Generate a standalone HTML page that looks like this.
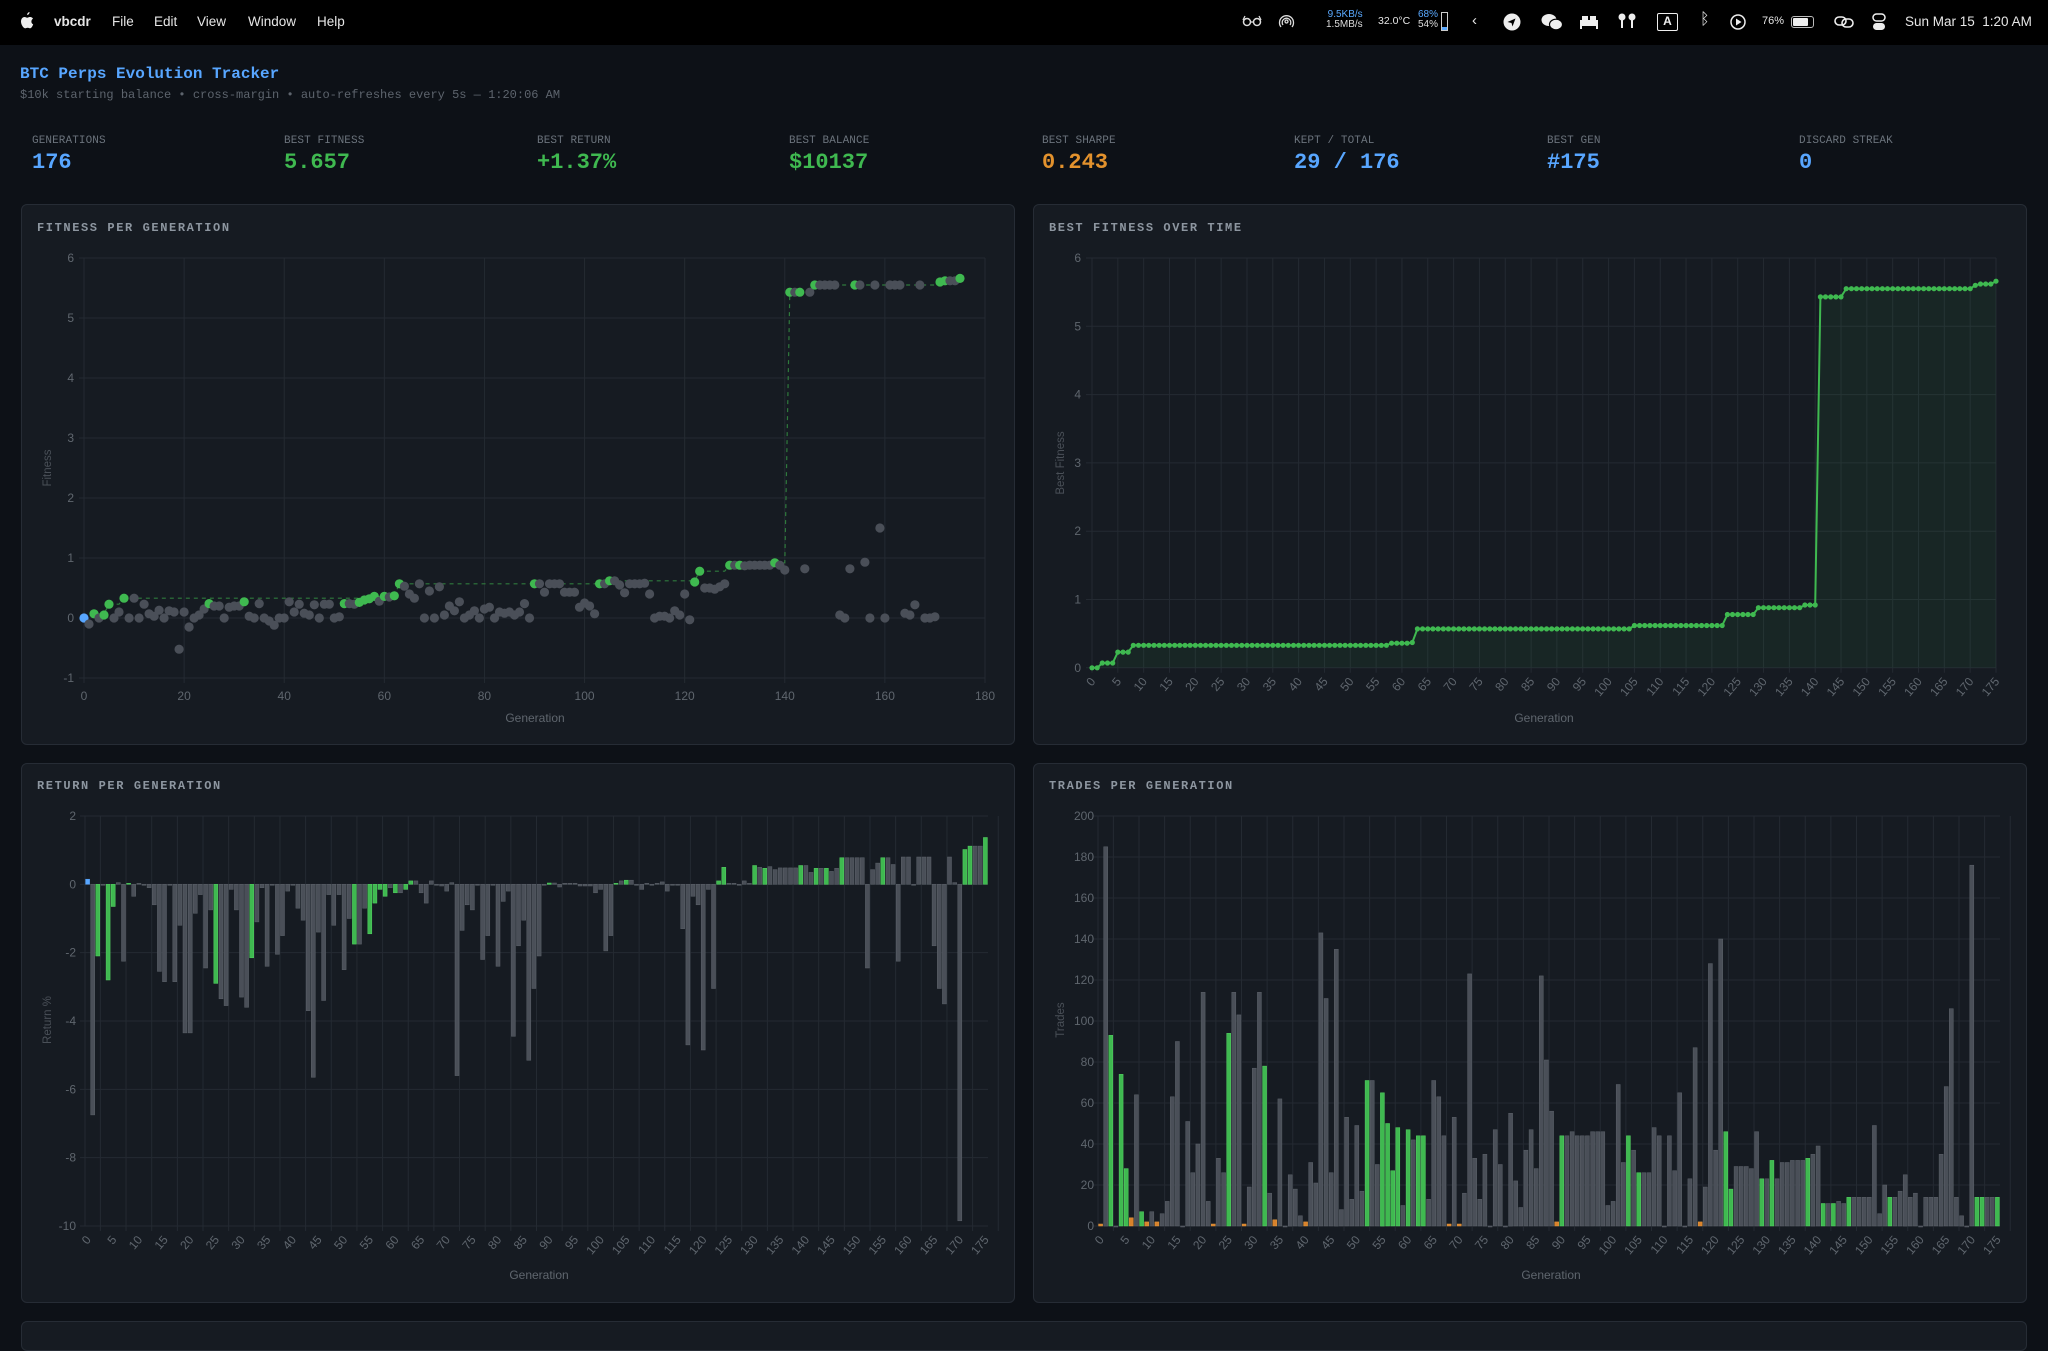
<!DOCTYPE html>
<html><head><meta charset="utf-8">
<style>
*{margin:0;padding:0;box-sizing:border-box}
html,body{width:2048px;height:1326px;overflow:hidden;background:#0d1117;font-family:"Liberation Sans",sans-serif}
.mb{position:absolute;left:0;top:0;width:2048px;height:45px;background:#000;color:#e6e6e6;font-size:13.5px}
.mb span{position:absolute;top:14px}
.mono{font-family:"Liberation Mono",monospace}
.ttl{position:absolute;left:20px;top:65px;font:bold 16px "Liberation Mono",monospace;color:#58a6ff}
.sub{position:absolute;left:20px;top:88px;font:12px "Liberation Mono",monospace;color:#5d646d}
.st{position:absolute;top:135px}
.st .l{font:11px "Liberation Mono",monospace;color:#6b737c;letter-spacing:0.1px}
.st .v{font:bold 22px "Liberation Mono",monospace;margin-top:3px}
.pn{position:absolute;background:#161b22;border:1px solid #262c35;border-radius:6px}
.pt{position:absolute;font:bold 12px "Liberation Mono",monospace;color:#8d96a0;letter-spacing:1.6px}
svg#c{position:absolute;left:0;top:0}
</style></head><body>
<div class="mb">
<svg style="position:absolute;left:19px;top:12px" width="15" height="18" viewBox="0 0 15 18"><path d="M10.5 0c.2 1.3-.9 2.9-2.3 3-.2-1.3.9-2.8 2.3-3zM12.4 9.6c0 2 1.8 2.7 1.8 2.7s-1.3 4-3 4c-1 0-1.3-.6-2.5-.6s-1.6.6-2.5.6C4.4 16.3 2 12.6 2 9.5 2 6.6 3.9 5 5.6 5c1 0 1.9.7 2.6.7.6 0 1.7-.8 2.9-.7.5 0 2 .2 2.9 1.6-.1.1-1.6 1-1.6 3z" fill="#eee"/></svg>
<span style="left:54px;font-weight:bold">vbcdr</span>
<span style="left:112px">File</span>
<span style="left:154px">Edit</span>
<span style="left:197px">View</span>
<span style="left:248px">Window</span>
<span style="left:317px">Help</span>
<svg style="position:absolute;left:1242px;top:15px" width="20" height="12" viewBox="0 0 20 12"><circle cx="5" cy="7" r="3.5" fill="none" stroke="#ddd" stroke-width="1.5"/><circle cx="15" cy="7" r="3.5" fill="none" stroke="#ddd" stroke-width="1.5"/><path d="M8.5 7h3M1 5l2-4M19 5l-2-4" stroke="#ddd" stroke-width="1.3"/></svg>
<svg style="position:absolute;left:1278px;top:13px" width="17" height="17" viewBox="0 0 17 17" fill="none" stroke="#ddd" stroke-width="1.3"><path d="M3 14A7 7 0 1 1 14 14"/><path d="M5 12A4.3 4.3 0 1 1 12 12"/><circle cx="8.5" cy="8.5" r="1.5"/></svg>
<span style="left:1326px;top:10px;font-size:10px;line-height:10px;text-align:right;color:#5aa9ff">9.5KB/s<br><b style="color:#ddd;font-weight:normal">1.5MB/s</b></span>
<span style="left:1378px;top:15px;font-size:10.5px">32.0°C</span>
<span style="left:1418px;top:10px;font-size:10px;line-height:10px;color:#5aa9ff">68%<br><b style="color:#ddd;font-weight:normal">54%</b></span>
<div style="position:absolute;left:1441px;top:12px;width:7px;height:19px;border:1px solid #ccc"><div style="position:absolute;bottom:0;left:0;right:0;height:3px;background:#5aa9ff"></div></div>
<span style="left:1472px;top:12px;font-size:15px">‹</span>
<svg style="position:absolute;left:1503px;top:13px" width="18" height="18" viewBox="0 0 18 18"><circle cx="9" cy="9" r="8.5" fill="#eee"/><path d="M4.5 9l8-3.5-3 8-1-3.5z" fill="#000"/></svg>
<svg style="position:absolute;left:1541px;top:13px" width="22" height="18" viewBox="0 0 22 18"><ellipse cx="8" cy="7" rx="7.5" ry="6" fill="#eee"/><ellipse cx="15" cy="11.5" rx="6.5" ry="5.3" fill="#eee" stroke="#000" stroke-width="1.2"/></svg>
<svg style="position:absolute;left:1579px;top:15px" width="20" height="14" viewBox="0 0 20 14"><rect x="1" y="5" width="18" height="6" fill="#eee"/><rect x="3" y="1" width="6" height="4" fill="#eee"/><rect x="11" y="1" width="6" height="4" fill="#eee"/><rect x="1" y="11" width="2" height="3" fill="#eee"/><rect x="17" y="11" width="2" height="3" fill="#eee"/></svg>
<svg style="position:absolute;left:1617px;top:13px" width="20" height="18" viewBox="0 0 20 18" fill="#eee"><circle cx="5" cy="4" r="3.5"/><rect x="4" y="5" width="2" height="10"/><circle cx="15" cy="4" r="3.5"/><rect x="14" y="5" width="2" height="10"/></svg>
<div style="position:absolute;left:1657px;top:13px;width:21px;height:18px;border:1.5px solid #eee;border-radius:2px;color:#eee;font-size:12px;text-align:center;line-height:15px;font-weight:bold">A</div>
<span style="left:1700px;top:11px;font-size:16px">ᛒ</span>
<svg style="position:absolute;left:1730px;top:14px" width="16" height="16" viewBox="0 0 16 16"><circle cx="8" cy="8" r="7" fill="none" stroke="#eee" stroke-width="1.5"/><path d="M6 4.5v7l5.5-3.5z" fill="#eee"/></svg>
<span style="left:1762px;top:15px;font-size:11px">76%</span>
<div style="position:absolute;left:1791px;top:16px;width:23px;height:12px;border:1px solid #bbb;border-radius:3px;padding:1px"><div style="width:15px;height:8px;background:#eee;border-radius:1px"></div></div>
<svg style="position:absolute;left:1834px;top:14px" width="20" height="16" viewBox="0 0 20 16" fill="none" stroke="#eee" stroke-width="1.6"><rect x="1" y="3" width="11" height="8" rx="4"/><rect x="8" y="5" width="11" height="8" rx="4"/></svg>
<svg style="position:absolute;left:1872px;top:13px" width="14" height="18" viewBox="0 0 14 18"><rect x="1" y="1" width="12" height="7" rx="3.5" fill="none" stroke="#eee" stroke-width="1.5"/><rect x="1" y="10" width="12" height="7" rx="3.5" fill="#eee"/></svg>
<span style="left:1905px;top:14px;font-size:13.5px">Sun Mar 15&nbsp; 1:20 AM</span>
</div>

<div class="ttl">BTC Perps Evolution Tracker</div>
<div class="sub">$10k starting balance • cross-margin • auto-refreshes every 5s — 1:20:06 AM</div>

<div class="st" style="left:32px"><div class="l">GENERATIONS</div><div class="v" style="color:#58a6ff">176</div></div>
<div class="st" style="left:284px"><div class="l">BEST FITNESS</div><div class="v" style="color:#3fb950">5.657</div></div>
<div class="st" style="left:537px"><div class="l">BEST RETURN</div><div class="v" style="color:#3fb950">+1.37%</div></div>
<div class="st" style="left:789px"><div class="l">BEST BALANCE</div><div class="v" style="color:#3fb950">$10137</div></div>
<div class="st" style="left:1042px"><div class="l">BEST SHARPE</div><div class="v" style="color:#e3922d">0.243</div></div>
<div class="st" style="left:1294px"><div class="l">KEPT / TOTAL</div><div class="v" style="color:#58a6ff">29 / 176</div></div>
<div class="st" style="left:1547px"><div class="l">BEST GEN</div><div class="v" style="color:#58a6ff">#175</div></div>
<div class="st" style="left:1799px"><div class="l">DISCARD STREAK</div><div class="v" style="color:#58a6ff">0</div></div>

<div class="pn" style="left:21px;top:204px;width:994px;height:541px"></div>
<div class="pn" style="left:1033px;top:204px;width:994px;height:541px"></div>
<div class="pn" style="left:21px;top:763px;width:994px;height:540px"></div>
<div class="pn" style="left:1033px;top:763px;width:994px;height:540px"></div>
<div class="pn" style="left:21px;top:1321px;width:2006px;height:30px"></div>
<div class="pt" style="left:37px;top:221px">FITNESS PER GENERATION</div>
<div class="pt" style="left:1049px;top:221px">BEST FITNESS OVER TIME</div>
<div class="pt" style="left:37px;top:779px">RETURN PER GENERATION</div>
<div class="pt" style="left:1049px;top:779px">TRADES PER GENERATION</div>

<svg id="c" width="2048" height="1326" xmlns="http://www.w3.org/2000/svg"></svg>
<script>
var F=[0,-0.1,0.07,0,0.05,0.23,0,0.1,0.33,0,0.33,0,0.23,0.07,0.03,0.13,0,0.12,0.1,-0.52,0.1,-0.15,0,0.05,0.15,0.24,0.2,0.2,0,0.18,0.2,0.2,0.27,0.03,0,0.24,0,-0.05,-0.12,0,0,0.27,0.1,0.23,0.08,0.05,0.22,0,0.23,0.23,0,0.02,0.24,0.24,0.23,0.26,0.3,0.32,0.36,0.28,0.36,0.35,0.37,0.57,0.53,0.4,0.33,0.57,0,0.45,0,0.52,0.05,0.2,0.12,0.27,0,0.05,0.12,0,0.15,0.18,0,0.1,0.08,0.1,0.05,0.1,0.24,0,0.57,0.57,0.43,0.57,0.57,0.57,0.43,0.43,0.43,0.18,0.25,0.2,0.07,0.57,0.57,0.62,0.62,0.55,0.42,0.57,0.57,0.57,0.58,0.4,0,0.03,0.03,0,0.12,0.05,0.4,-0.03,0.6,0.78,0.5,0.5,0.48,0.52,0.57,0.88,0.88,0.88,0.87,0.88,0.88,0.88,0.88,0.88,0.92,0.88,0.8,5.43,5.43,5.43,0.82,5.43,5.55,5.55,5.55,5.55,5.55,0.05,0,0.82,5.55,5.55,0.93,0,5.55,1.5,0,5.55,5.55,5.55,0.08,0.05,0.22,5.55,0,0,0.02,5.6,5.62,5.62,5.62,5.66];
var FK=[2,4,5,8,25,32,52,55,56,57,58,60,62,63,90,103,105,122,123,129,131,138,141,143,146,154,171,172,175];
var R=[0.15,-6.75,-2.1,0,-2.8,-0.65,0.05,-2.25,0.03,-0.35,0.03,0,-0.1,-0.6,-2.55,-2.85,0,-2.85,-1.2,-4.35,-4.35,-0.85,-0.3,-2.45,-0.75,-2.9,-3.35,-3.55,-0.15,-0.75,-3.3,-3.6,-2.15,-1.1,-0.1,-2.4,0,-2.05,-1.5,-0.2,0,-0.7,-1.05,-3.7,-5.65,-1.4,-3.4,-0.3,-1.2,-0.3,-2.5,-1.0,-1.75,-1.75,-0.7,-1.45,-0.55,-0.15,-0.35,-0.1,-0.25,-0.25,-0.15,0.1,0.1,-0.25,-0.55,0.1,0,-0.05,-0.2,0.05,-5.6,-1.35,-0.6,-0.75,0,-2.2,-1.5,0,-2.4,-0.5,-0.2,-4.45,-1.8,-1.05,-5.15,-3.05,-2.1,0,0.04,0.04,-0.08,0.03,0.03,0.03,-0.05,-0.05,-0.05,-0.25,-0.15,-1.95,-1.5,0.03,0.1,0.12,0.12,0,-0.15,0.03,0,0.03,0.07,-0.2,0,0,-1.3,-4.7,-0.35,-0.6,-4.85,-0.15,-3.05,0.1,0.5,0.03,0.03,0,0.1,0.03,0.55,0.5,0.47,0.52,0.43,0.48,0.48,0.48,0.48,0.55,0.55,0.35,0.47,0.47,0.47,0.38,0.47,0.78,0.78,0.78,0.78,0.78,-2.45,0.43,0.62,0.78,0.78,0.58,-2.25,0.8,0.8,0,0.8,0.8,0.8,-1.8,-3.05,-3.5,0.8,0.05,-9.85,1.02,1.12,1.12,1.12,1.37];
var RK=[2,4,5,8,25,32,52,55,56,57,58,60,62,63,90,103,105,123,124,130,132,139,142,144,147,155,171,172,175];
var T=[1,185,93,0,74,28,4,64,7,2,7,2,6,12,63,90,0,51,26,40,114,12,1,33,26,94,114,103,1,19,77,114,78,16,3,62,0,25,18,5,2,31,21,143,111,26,135,8,53,13,49,17,71,71,30,65,50,27,48,10,47,42,44,44,13,71,63,44,1,53,1,16,123,33,13,35,0,47,30,0,55,22,9,37,47,28,122,81,56,2,44,44,46,44,44,44,46,46,46,10,12,69,31,44,37,26,26,26,48,44,0,44,27,65,0,23,87,2,19,128,37,140,46,18,29,29,29,28,46,23,23,32,23,31,31,32,32,32,33,35,39,11,11,11,12,11,14,14,14,14,14,49,6,20,14,14,17,25,14,16,0,14,14,14,35,68,106,14,5,0,176,14,14,14,14,14];
var TK=[2,4,5,8,25,32,52,55,56,57,58,60,62,63,90,103,105,122,123,129,131,138,141,143,146,154,171,172,175];
var TO=[0,6,9,11,22,28,34,40,68,70,89,117];
var G='#3fb950',GR='#4a4f58',GB='#5d636b',GRID='#242a32',TX='#5f666e';
var s='';
function L(x1,y1,x2,y2,c,w,d){s+='<line x1="'+x1+'" y1="'+y1+'" x2="'+x2+'" y2="'+y2+'" stroke="'+c+'" stroke-width="'+(w||1)+'"'+(d?' stroke-dasharray="'+d+'"':'')+'/>';}
function Tx(x,y,t,a,ex){s+='<text x="'+x+'" y="'+y+'" fill="'+TX+'" font-size="12" font-family="Liberation Sans, sans-serif" text-anchor="'+(a||'middle')+'"'+(ex||'')+'>'+t+'</text>';}
function rot(x,y,t){s+='<text transform="translate('+x+','+y+') rotate(-50)" fill="'+TX+'" font-size="12" font-family="Liberation Sans, sans-serif" text-anchor="end">'+t+'</text>';}
function vlab(x,y,t){s+='<text transform="translate('+x+','+y+') rotate(-90)" fill="#4a5058" font-size="11.5" font-family="Liberation Sans, sans-serif" text-anchor="middle">'+t+'</text>';}
(function(){var x0=84,x1=985,yt=258,u=60;function X(g){return x0+g*(x1-x0)/180}function Y(v){return yt+(6-v)*u}
for(var k=-1;k<=6;k++){L(79,Y(k),x1,Y(k),GRID);Tx(74,Y(k)+4,k,'end');}
for(var g=0;g<=180;g+=20){L(X(g),yt,X(g),Y(-1)+5,GRID);Tx(X(g),Y(-1)+22,g);}
Tx(535,722,'Generation');vlab(51,468,'Fitness');
var best=-9,p='';for(var i=0;i<F.length;i++){if(FK.indexOf(i)>=0||i==0){best=Math.max(best,F[i]);}p+=(i?'L':'M')+X(i).toFixed(1)+' '+Y(best).toFixed(1)+' ';}
s+='<path d="'+p+'" fill="none" stroke="#2f7a3c" stroke-width="1.2" stroke-dasharray="4 4"/>';
for(var i=0;i<F.length;i++){var c=i==0?'#58a6ff':(FK.indexOf(i)>=0?G:GR);s+='<circle cx="'+X(i).toFixed(1)+'" cy="'+Y(F[i]).toFixed(1)+'" r="4.6" fill="'+c+'"/>';}
})();
(function(){var x0=1092,x1=1996,yt=258,u=68.3;function X(g){return x0+g*(x1-x0)/175}function Y(v){return yt+(6-v)*u}
for(var k=0;k<=6;k++){L(1086,Y(k),x1,Y(k),GRID);Tx(1081,Y(k)+4,k,'end');}
for(var g=0;g<=175;g+=5){L(X(g),yt,X(g),Y(0)+5,GRID);rot(X(g)+4,Y(0)+14,g);}
Tx(1544,722,'Generation');vlab(1064,463,'Best Fitness');
var best=-9,pts=[];for(var i=0;i<F.length;i++){if(FK.indexOf(i)>=0||i==0)best=Math.max(best,F[i]);pts.push([X(i),Y(best)]);}
var p='';pts.forEach(function(q,i){p+=(i?'L':'M')+q[0].toFixed(1)+' '+q[1].toFixed(1)+' '});
s+='<path d="'+p+'L'+x1+' '+Y(0)+' L'+x0+' '+Y(0)+'Z" fill="#3fb950" fill-opacity="0.07"/>';
s+='<path d="'+p+'" fill="none" stroke="'+G+'" stroke-width="2"/>';
pts.forEach(function(q){s+='<circle cx="'+q[0].toFixed(1)+'" cy="'+q[1].toFixed(1)+'" r="2.6" fill="'+G+'"/>'});
})();
function bars(x0,x1,yt,yb,vmax,vmin,data,keep,step,lx,labx,ylab,yly,other,orng){
 var n=176,w=(x1-x0)/n;function X(i){return x0+(i+0.5)*w}function Y(v){return yt+(vmax-v)*(yb-yt)/(vmax-vmin)}
 for(var v=vmin;v<=vmax;v+=step){L(x0-5,Y(v),x1,Y(v),GRID);Tx(lx,Y(v)+4,v,'end');}
 for(var g=0;g<=175;g+=5){L(X(g)+2.5*w,yt,X(g)+2.5*w,yb+5,GRID);rot(X(g)+4,yb+14,g);}
 L(x0,yt,x0,yb,GRID);
 Tx(labx,yb+53,'Generation');vlab(ylab,yly,other);
 for(var i=0;i<n;i++){var v=data[i];if(v===undefined)continue;var c=GR,st=GB;
  if(keep.indexOf(i)>=0){c=G;st='#56d364';}
  if(orng&&orng.indexOf(i)>=0){c='#d9822b';st='#e69a3f';}
  if(i==0&&vmin<0){c='#58a6ff';st='#58a6ff';}
  var ya=Y(Math.max(v,0)),yb2=Y(Math.min(v,0));if(Math.abs(yb2-ya)<1){yb2=ya+1;}
  s+='<rect x="'+(X(i)-2).toFixed(1)+'" y="'+ya.toFixed(1)+'" width="4" height="'+(yb2-ya).toFixed(1)+'" fill="'+c+'" stroke="'+st+'" stroke-width="0.5"/>';}
}
bars(85,988,816,1226,2,-10,R,RK,2,76,539,51,1020,'Return %');
bars(1098,2000,816,1226,200,0,T,TK,20,1094,1551,1064,1020,'Trades',TO);
document.getElementById('c').innerHTML=s;
</script>
</body></html>
